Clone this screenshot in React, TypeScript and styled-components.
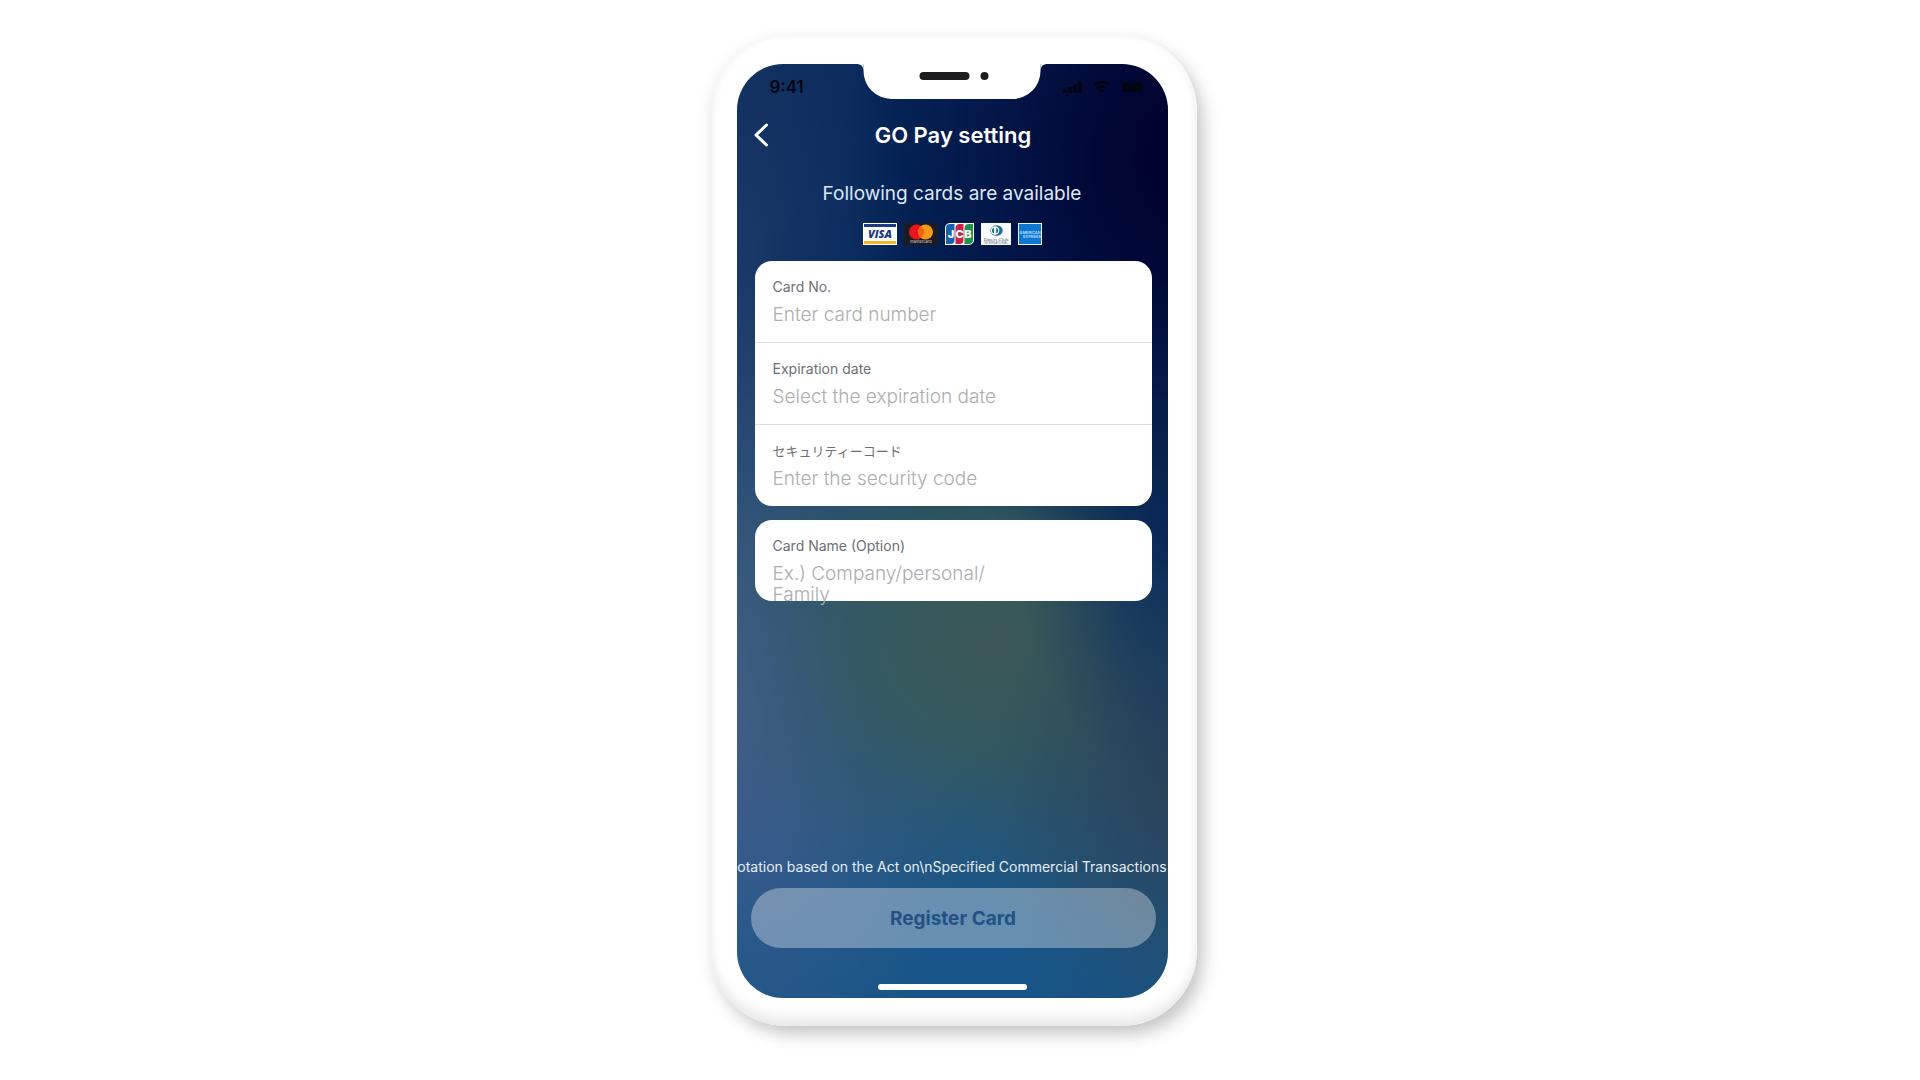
import React from "react";
import styled, { createGlobalStyle } from "styled-components";

const GlobalStyle = createGlobalStyle`
  *, *::before, *::after { box-sizing: border-box; }
  html, body { margin: 0; background: #fff; }
  body, button, input, textarea {
    font-family: Inter, "Noto Sans CJK JP", sans-serif;
  }
`;

const Page = styled.main`
  min-height: 100vh;
  display: flex;
  justify-content: center;
  align-items: flex-start;
  padding: 35px 14px 35px 0;
`;

const Phone = styled.div`
  padding: 29px 29px 28px 27px;
  border-radius: 76px;
  background: #fff;
  box-shadow:
    inset 0 -14px 14px -6px #e8e8e8,
    inset -5px 0 8px -2px #f5f5f5,
    inset 5px 0 8px -2px #f3f3f3,
    8px 10px 18px -2px rgba(0, 0, 0, 0.2),
    0 4px 18px rgba(0, 0, 0, 0.06);
`;

const Screen = styled.section`
  position: relative;
  display: flex;
  flex-direction: column;
  width: 431px;
  min-height: 934px;
  padding-bottom: 8px;
  border-radius: 46px;
  overflow: hidden;
  background:
    radial-gradient(ellipse 340px 440px at 104% 10%, #00002c 0%, rgba(0, 0, 46, 0.82) 25%, rgba(0, 0, 50, 0.4) 60%, rgba(0, 0, 54, 0) 100%),
    radial-gradient(ellipse 170px 260px at 104% 50%, rgba(8, 42, 92, 1) 0%, rgba(8, 42, 92, 0.55) 45%, rgba(8, 42, 92, 0.15) 80%, rgba(8, 42, 92, 0) 100%),
    radial-gradient(ellipse 220px 300px at 104% 76%, rgba(42, 64, 88, 1) 0%, rgba(44, 68, 86, 0.5) 50%, rgba(46, 72, 84, 0.12) 82%, rgba(46, 70, 82, 0) 100%),
    radial-gradient(ellipse 320px 270px at 60% 62%, rgba(60, 88, 86, 1) 0%, rgba(54, 90, 92, 0.9) 35%, rgba(48, 88, 98, 0.4) 68%, rgba(44, 88, 104, 0) 100%),
    radial-gradient(ellipse 240px 440px at 0% 68%, rgba(68, 94, 142, 1) 0%, rgba(64, 92, 138, 0.5) 50%, rgba(60, 90, 134, 0) 100%),
    radial-gradient(ellipse 180px 400px at 0% 20%, rgba(34, 62, 108, 0.75) 0%, rgba(34, 62, 108, 0) 100%),
    linear-gradient(180deg, #06285a 0%, #03265a 22%, #12445f 46%, #23526a 62%, #205684 80%, #17568b 92%, #185488 100%);
`;

const Notch = styled.div`
  position: absolute;
  top: -1px;
  left: 50%;
  transform: translateX(-50%);
  display: flex;
  justify-content: center;
  gap: 11px;
  width: 177px;
  height: 36px;
  padding: 9px 0 0 3px;
  border-radius: 0 0 28px 28px;
  background: #fff;

  &::before,
  &::after {
    content: "";
    position: absolute;
    top: 1px;
    width: 5px;
    height: 5px;
  }
  &::before {
    right: 100%;
    background: radial-gradient(circle at 0 100%, transparent 4px, #fff 5px);
  }
  &::after {
    left: 100%;
    background: radial-gradient(circle at 100% 100%, transparent 4px, #fff 5px);
  }
`;

const Speaker = styled.span`
  width: 50px;
  height: 8px;
  border-radius: 4px;
  background: #1d1d1f;
`;

const Camera = styled.span`
  width: 8px;
  height: 8px;
  border-radius: 50%;
  background: #1d1d1f;
`;

const StatusBar = styled.div`
  display: flex;
  justify-content: space-between;
  align-items: center;
  height: 46px;
  padding: 0 23px 0 33px;
  color: #000514;
  font-size: 17px;
  font-weight: 600;
`;

const Header = styled.header`
  display: grid;
  grid-template-columns: 48px 1fr 46px;
  align-items: center;
  height: 50px;
`;

const BackButton = styled.button`
  display: flex;
  padding: 0 0 0 16px;
  border: 0;
  background: none;
  color: #fff;
`;

const Title = styled.h1`
  margin: 0;
  color: #fff;
  font-size: 22px;
  line-height: 28px;
  font-weight: 600;
  text-align: center;
`;

const Lead = styled.p`
  margin: 21px 0 0;
  color: #dce8f8;
  font-size: 19px;
  line-height: 26px;
  text-align: center;
`;

const Brands = styled.div`
  display: flex;
  justify-content: center;
  gap: 7px;
  height: 22px;
  margin: 16px 0;
`;

const Form = styled.form`
  flex: 1;
  display: flex;
  flex-direction: column;
`;

const Card = styled.div`
  margin: 0 16px 14px 18px;
  border-radius: 17px;
  background: #fff;
`;

const Field = styled.div`
  display: flex;
  flex-direction: column;
  height: 81px;
  padding: 16px 18px 0;

  & + & {
    height: 82px;
    border-top: 1px solid #dcdee2;
  }
`;

const Label = styled.label<{ $japanese?: boolean }>`
  color: #6c6f74;
  font-size: ${(p) => (p.$japanese ? 13 : 14)}px;
  line-height: 20px;
`;

const TextInput = styled.input`
  width: 100%;
  height: 22px;
  margin-top: 7px;
  padding: 0;
  border: 0;
  outline: 0;
  background: none;
  color: #333;
  font-size: 19px;
  font-weight: 300;
  line-height: 22px;

  &::placeholder { color: #abadb0; opacity: 1; }
`;

const TextArea = styled(TextInput).attrs({ as: "textarea" })`
  flex: none;
  width: 240px;
  height: 44px;
  line-height: 21px;
  overflow: hidden;
  resize: none;
`;

const Footer = styled.div`
  display: flex;
  flex-direction: column;
  margin-top: auto;
`;

const Notation = styled.a`
  display: flex;
  justify-content: center;
  color: #e4edf8;
  font-size: 14px;
  line-height: 20px;
  text-decoration: none;
  white-space: nowrap;
`;

const RegisterButton = styled.button`
  height: 60px;
  margin: 11px 12px 36px 14px;
  border: 0;
  border-radius: 30px;
  background: rgba(255, 255, 255, 0.34);
  color: #235282;
  font-size: 19px;
  font-weight: 700;
`;

const HomeIndicator = styled.div`
  align-self: center;
  width: 149px;
  height: 6px;
  border-radius: 3px;
  background: #fff;
`;

const StatusIcons = () => (
  <svg width="82" height="14" viewBox="0 0 82 14" fill="currentColor" aria-hidden="true">
    <rect x="0" y="9" width="4" height="4" rx="1" />
    <rect x="5" y="7" width="4" height="6" rx="1" />
    <rect x="10" y="4" width="4" height="9" rx="1" />
    <rect x="15" y="1" width="4" height="12" rx="1" />
    <g fill="none" stroke="currentColor" strokeWidth="2.500">
      <path d="M31 5.200a11 11 0 0 1 15 0" />
      <path d="M34 8.400a6.500 6.500 0 0 1 9 0" />
    </g>
    <path d="M36 10.300a3.700 3.700 0 0 1 5 0L38.500 13z" />
    <rect x="59" y="2" width="20" height="10" rx="3" />
    <path d="M80 5c1.600.6 1.600 3.400 0 4z" />
  </svg>
);

const Visa = () => (
  <svg width="34" height="22" viewBox="0 0 34 22" role="img" aria-label="Visa">
    <rect width="34" height="22" fill="#fff" />
    <rect x="1" y="1" width="32" height="3" fill="#1b3b86" />
    <rect x="1" y="18" width="32" height="3" fill="#f2b32a" />
    <text x="17" y="15" textAnchor="middle" fontFamily="Open Sans, sans-serif" fontSize="11" fontWeight="800" fontStyle="italic" fill="#1b3b86">VISA</text>
  </svg>
);

const Mastercard = () => (
  <svg width="34" height="22" viewBox="0 0 34 22" role="img" aria-label="Mastercard">
    <rect width="34" height="22" fill="#1e1b20" />
    <circle cx="12.500" cy="9" r="7.500" fill="#e8141f" />
    <circle cx="21.500" cy="9" r="7.500" fill="#f79a1c" />
    <path d="M17 3a7.500 7.500 0 0 1 0 12a7.500 7.500 0 0 1 0-12z" fill="#f8600f" />
    <text x="17" y="20" textAnchor="middle" fontFamily="Inter, sans-serif" fontSize="4" fill="#d8d8d8">mastercard</text>
  </svg>
);

const Jcb = () => (
  <svg width="29" height="22" viewBox="0 0 29 22" role="img" aria-label="JCB">
    <path d="M5 0H29V17a5 5 0 0 1-5 5H0V5a5 5 0 0 1 5-5z" fill="#fff" />
    <path d="M5 1H9.500V17a4 4 0 0 1-4 4H1V5a4 4 0 0 1 4-4z" fill="#1660ad" />
    <path d="M14 1H18.500V17a4 4 0 0 1-4 4H10.500V5a4 4 0 0 1 3.500-4z" fill="#cf1f42" />
    <path d="M23 1H28V17a4 4 0 0 1-4 4H19.500V5a4 4 0 0 1 3.500-4z" fill="#219348" />
    <g fontFamily="Inter, sans-serif" fontSize="11" fontWeight="800" textAnchor="middle" fill="#fff">
      <text x="6" y="15">J</text>
      <text x="14.500" y="15">C</text>
      <text x="23" y="15">B</text>
    </g>
  </svg>
);

const Diners = () => (
  <svg width="30" height="22" viewBox="0 0 30 22" role="img" aria-label="Diners Club International">
    <rect width="30" height="22" fill="#f8fafb" />
    <ellipse cx="15.500" cy="7.500" rx="6.200" ry="5.200" fill="#1b6f9b" />
    <circle cx="14" cy="7.500" r="4.300" fill="#fff" />
    <path d="M13 4.400a3.300 3.300 0 0 0 0 6.200zM15.200 4.400a3.300 3.300 0 0 1 0 6.200z" fill="#1b6f9b" />
    <text x="15" y="17.500" textAnchor="middle" fontFamily="Liberation Serif, serif" fontSize="5" fill="#53636e">Diners Club</text>
    <text x="15" y="21" textAnchor="middle" fontFamily="Liberation Sans, sans-serif" fontSize="3" fill="#6b7780">INTERNATIONAL</text>
  </svg>
);

const Amex = () => (
  <svg width="24" height="22" viewBox="0 0 24 22" role="img" aria-label="American Express">
    <rect width="24" height="22" fill="#e8f3fc" />
    <rect x="1" y="1" width="22" height="20" fill="#0c78d2" />
    <text x="12" y="11" textAnchor="middle" fontFamily="Inter, sans-serif" fontSize="4" fontWeight="600" fill="#bcdcf6">AMERICAN</text>
    <text x="14" y="15" textAnchor="middle" fontFamily="Inter, sans-serif" fontSize="4" fontWeight="600" fill="#bcdcf6">EXPRESS</text>
  </svg>
);

export default function App() {
  return (
    <>
      <GlobalStyle />
      <Page>
        <Phone>
          <Screen>
            <Notch>
              <Speaker />
              <Camera />
            </Notch>
            <StatusBar>
              <span>9:41</span>
              <StatusIcons />
            </StatusBar>
            <Header>
              <BackButton type="button" aria-label="Back">
                <svg width="16" height="24" viewBox="0 0 16 24" fill="none" stroke="currentColor" strokeWidth="3" strokeLinecap="round" strokeLinejoin="round">
                  <path d="M13.500 2L3 12l10.500 10" />
                </svg>
              </BackButton>
              <Title>GO Pay setting</Title>
            </Header>
            <Lead>Following cards are available</Lead>
            <Brands>
              <Visa />
              <Mastercard />
              <Jcb />
              <Diners />
              <Amex />
            </Brands>
            <Form onSubmit={(e: React.FormEvent) => e.preventDefault()}>
              <Card>
                <Field>
                  <Label htmlFor="number">Card No.</Label>
                  <TextInput id="number" placeholder="Enter card number" />
                </Field>
                <Field>
                  <Label htmlFor="expiry">Expiration date</Label>
                  <TextInput id="expiry" placeholder="Select the expiration date" />
                </Field>
                <Field>
                  <Label htmlFor="code" $japanese>セキュリティーコード</Label>
                  <TextInput id="code" placeholder="Enter the security code" />
                </Field>
              </Card>
              <Card>
                <Field>
                  <Label htmlFor="name">Card Name (Option)</Label>
                  <TextArea id="name" placeholder={"Ex.) Company/personal/\nFamily"} />
                </Field>
              </Card>
              <Footer>
                <Notation href="#notation">
                  {"otation based on the Act on\\nSpecified Commercial Transactions"}
                </Notation>
                <RegisterButton type="submit">Register Card</RegisterButton>
                <HomeIndicator />
              </Footer>
            </Form>
          </Screen>
        </Phone>
      </Page>
    </>
  );
}
